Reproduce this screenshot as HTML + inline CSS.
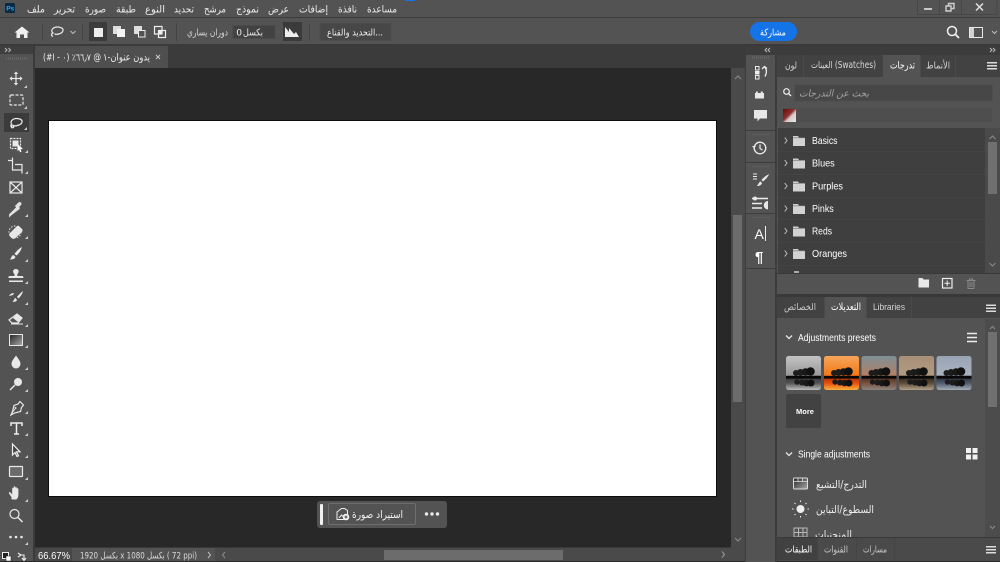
<!DOCTYPE html>
<html><head><meta charset="utf-8">
<style>
html,body{margin:0;padding:0;width:1000px;height:562px;overflow:hidden;background:#535353}
svg{display:block}
svg.root{filter:blur(.3px)}
text{font-family:"DejaVu Sans","Liberation Sans",sans-serif;fill:#ececec;font-size:10px}
.l{font-family:"Liberation Sans",sans-serif;font-size:10.5px;fill:#fff}
.i{fill:none;stroke:#e8e8e8;stroke-width:1.2}
.f{fill:#e8e8e8}
.c{fill:none;stroke:#bdbdbd;stroke-width:1}
</style></head><body>
<svg class="root" width="1000" height="562" viewBox="0 0 1000 562" xmlns="http://www.w3.org/2000/svg">
<defs>
<linearGradient id="gr" x1="0" y1="0" x2="1" y2="1"><stop offset="0" stop-color="#222"/><stop offset="1" stop-color="#aaa"/></linearGradient>
<linearGradient id="rd" x1="0" y1="0" x2="1" y2="1"><stop offset="0" stop-color="#6d0808"/><stop offset=".45" stop-color="#8a3030"/><stop offset=".6" stop-color="#d8c8c8"/><stop offset="1" stop-color="#e8e8e8"/></linearGradient>
<linearGradient id="t1" x1="0" y1="0" x2="0" y2="1"><stop offset="0" stop-color="#c4c4c4"/><stop offset=".55" stop-color="#9a9a9a"/><stop offset=".62" stop-color="#333"/><stop offset=".8" stop-color="#555"/><stop offset="1" stop-color="#bbb"/></linearGradient>
<linearGradient id="t2" x1="0" y1="0" x2="0" y2="1"><stop offset="0" stop-color="#f6a55c"/><stop offset=".55" stop-color="#f27a18"/><stop offset=".62" stop-color="#b02c04"/><stop offset=".8" stop-color="#e8500c"/><stop offset="1" stop-color="#f8b040"/></linearGradient>
<linearGradient id="t3" x1="0" y1="0" x2="0" y2="1"><stop offset="0" stop-color="#7f8f96"/><stop offset=".55" stop-color="#b08068"/><stop offset=".62" stop-color="#4a2c20"/><stop offset=".8" stop-color="#7a5240"/><stop offset="1" stop-color="#8a8480"/></linearGradient>
<linearGradient id="t4" x1="0" y1="0" x2="0" y2="1"><stop offset="0" stop-color="#a89078"/><stop offset=".55" stop-color="#b09a80"/><stop offset=".62" stop-color="#30241a"/><stop offset=".8" stop-color="#5e4c3a"/><stop offset="1" stop-color="#b0a088"/></linearGradient>
<linearGradient id="t5" x1="0" y1="0" x2="0" y2="1"><stop offset="0" stop-color="#98a4b4"/><stop offset=".55" stop-color="#aab2c0"/><stop offset=".62" stop-color="#262e38"/><stop offset=".8" stop-color="#505c6c"/><stop offset="1" stop-color="#a4acb8"/></linearGradient>
<g id="tree"><circle cx="10" cy="17" r="3" fill="#1c1c1c"/><circle cx="14.500" cy="16.500" r="3.500" fill="#1c1c1c"/><circle cx="19.500" cy="16" r="3.800" fill="#181818"/><circle cx="24.500" cy="15.500" r="4.300" fill="#101010"/><rect x="0" y="20" width="35" height="2.600" fill="#080808"/><circle cx="11" cy="26" r="2.700" fill="#1c1c1c"/><circle cx="16" cy="26.500" r="3" fill="#1c1c1c"/><circle cx="20.500" cy="27" r="3.300" fill="#181818"/><circle cx="25" cy="27" r="3.500" fill="#101010"/></g>
<g id="fold"><path d="M0 1h5l1 1.500h6v8.500H0z" fill="#d2d2d2"/><path d="M0 2.800h12" stroke="#777" stroke-width=".7"/></g>
<g id="chev"><path d="M-1.300-3L1 0l-2.300 3" class="c"/></g>
<g id="ham"><path d="M0 .75h10M0 3.75h10M0 6.75h10" stroke="#dcdcdc" stroke-width="1.400"/></g>
<g id="cor"><path d="M3 0v3H0z" fill="#cfcfcf"/></g>
</defs>

<!-- base -->
<rect width="1000" height="562" fill="#535353"/>
<!-- menu -->
<rect x="405" y="0" width="10" height="1" fill="#1473e6"/>
<rect x="5" y="3" width="10" height="10" rx="1.500" fill="#0a2a44"/>
<text x="6.300" y="10.600" style="font-size:6.500px;font-weight:bold;fill:#31a8ff;font-family:'Liberation Sans'">Ps</text>
<g style="direction:rtl">
<text x="45" y="12.500" textLength="18" lengthAdjust="spacingAndGlyphs">ملف</text>
<text x="75" y="12.500" textLength="21" lengthAdjust="spacingAndGlyphs">تحرير</text>
<text x="106" y="12.500" textLength="21" lengthAdjust="spacingAndGlyphs">صورة</text>
<text x="136" y="12.500" textLength="20" lengthAdjust="spacingAndGlyphs">طبقة</text>
<text x="165" y="12.500" textLength="20" lengthAdjust="spacingAndGlyphs">النوع</text>
<text x="194" y="12.500" textLength="20" lengthAdjust="spacingAndGlyphs">تحديد</text>
<text x="226" y="12.500" textLength="22" lengthAdjust="spacingAndGlyphs">مرشح</text>
<text x="259" y="12.500" textLength="23" lengthAdjust="spacingAndGlyphs">نموذج</text>
<text x="289" y="12.500" textLength="21" lengthAdjust="spacingAndGlyphs">عرض</text>
<text x="328" y="12.500" textLength="29" lengthAdjust="spacingAndGlyphs">إضافات</text>
<text x="357" y="12.500" textLength="19" lengthAdjust="spacingAndGlyphs">نافذة</text>
<text x="397" y="12.500" textLength="30" lengthAdjust="spacingAndGlyphs">مساعدة</text>
</g>
<!-- window buttons -->
<path d="M917.500 0v14.500H997V0M939.500 0v14.500M961.500 0v14.500" fill="none" stroke="#474747"/>
<rect x="924" y="8" width="8" height="2" fill="#c8c8c8"/>
<path d="M946 6h5v5h-5zM948.500 6V3.500h5.500v5h-3" fill="none" stroke="#d0d0d0" stroke-width="1.400"/>
<path d="M976 3.500l7 7M983 3.500l-7 7" stroke="#e0e0e0" stroke-width="1.500"/>
<rect y="17" width="1000" height="1" fill="#3d3d3d"/>

<!-- options -->
<path d="M22 26.500l-7.500 6h2V38h3.500v-3.500h4V38h3.500v-5.500h2z" fill="#f0f0f0"/>
<rect x="42" y="23" width="1" height="18" fill="#444"/>
<path d="M53 36.500c-2.500-1-1.500-3 0-3.500-3-2.500 0-6 4.500-6 3.500 0 6 1.500 5.500 3.500-.5 3-5.500 4.500-8.500 3.500" class="i"/>
<path d="M70.500 31l2.500 2.500 2.500-2.500" class="c"/>
<rect x="82" y="23" width="1" height="18" fill="#444"/>
<rect x="89" y="22" width="18" height="19" fill="#3b3b3b"/>
<rect x="94" y="28" width="9" height="9" fill="#ececec"/>
<path d="M113 26h8v8h-8z" fill="#ddd"/><path d="M117 29h8v8h-8z" fill="#f2f2f2"/>
<path d="M134 26h8v8h-8z" fill="#ddd"/><path d="M138.500 30.500h6.500v6.500h-6.500z" fill="#535353" stroke="#eee"/>
<path d="M154.500 26.500h7.500v7.500h-7.500zM158.500 30.500h7v7h-7z" fill="none" stroke="#eee" stroke-width="1.200"/><rect x="158.500" y="30.500" width="3.500" height="3.500" fill="#eee"/>
<rect x="176" y="23" width="1" height="18" fill="#444"/>
<g style="direction:rtl"><text x="228" y="35.500" textLength="41" lengthAdjust="spacingAndGlyphs" style="font-size:9.500px;fill:#d8d8d8">دوران يساري</text></g>
<rect x="233" y="25.500" width="42" height="13" fill="#424242" stroke="#4a4a4a"/>
<g style="direction:rtl"><text x="263" y="35.500" textLength="20" lengthAdjust="spacingAndGlyphs" style="font-size:9.500px">بكسل</text></g>
<text x="236.500" y="35.500" class="l" style="font-size:9.500px">0</text>
<rect x="283" y="22" width="19" height="19" fill="#3b3b3b"/>
<path d="M285 37v-10l4 5 0-4 5 6 2-2 3 5z" fill="#eee"/>
<rect x="309" y="23" width="1" height="18" fill="#444"/>
<rect x="320" y="23.500" width="71" height="17" fill="#474747" stroke="#4c4c4c"/>
<g style="direction:rtl"><text x="383" y="35.500" textLength="56" lengthAdjust="spacingAndGlyphs" style="font-size:9.500px">...التحديد والقناع</text></g>
<rect x="750" y="22" width="47" height="19" rx="9.500" fill="#1473e6"/>
<g style="direction:rtl"><text x="786" y="35.500" textLength="26" lengthAdjust="spacingAndGlyphs" style="font-size:9.500px;fill:#fff">مشاركة</text></g>
<circle cx="952" cy="31" r="4.500" fill="none" stroke="#f0f0f0" stroke-width="1.500"/><path d="M955.500 34.500l3.500 3.500" stroke="#f0f0f0" stroke-width="1.800"/>
<rect x="969.500" y="27.500" width="13" height="10" fill="none" stroke="#e8e8e8"/><rect x="970" y="28" width="4" height="9" fill="#d0d0d0"/>
<path d="M992 31l2.500 2.500 2.500-2.500" class="c"/>

<rect y="44" width="1000" height="2" fill="#3a3a3a"/>

<!-- left toolbar -->
<rect x="0" y="46" width="33" height="8" fill="#3f3f3f"/>
<path d="M5 48l2 2-2 2M8.500 48l2 2-2 2" class="c"/>
<path d="M6 58.500h22" stroke="#6a6a6a" stroke-dasharray="1 1" stroke-width="2"/>
<rect x="33" y="46" width="2" height="516" fill="#3a3a3a"/>
<rect x="4" y="113" width="25" height="19" fill="#3b3b3b"/>

<!-- tools -->
<path d="M16 72.500v12M10.500 78.500h11" class="i"/><path d="M16 71.500l-2.200 2.500h4.400zM16 85.500l-2.200-2.500h4.400zM9.500 78.500l2.500-2.200v4.400zM22.500 78.500l-2.500-2.200v4.400z" class="f"/>
<use href="#cor" x="24" y="85"/>
<rect x="10" y="95" width="13" height="10" rx="1" class="i" stroke-dasharray="3 1.500"/>
<use href="#cor" x="24" y="106"/>
<path d="M12.500 127c-2-.5-2-2-1-3-1.500-2.500 1-5.500 5-5.500 3.500 0 6 1.300 5.500 3.500-.5 3-6 4.500-9.500 3.500" class="i"/><circle cx="12.500" cy="126.500" r="1.300" class="i" stroke-width="1"/>
<use href="#cor" x="24" y="127"/>
<rect x="10.500" y="138.500" width="10" height="10" class="i" stroke-dasharray="2 1"/><rect x="12.500" y="140.500" width="6" height="6" class="f"/><path d="M17.500 144l5.500 5-2.500.3 1 2.500-1.500.5-1-2.500-1.500 1.500z" fill="#fff"/>
<use href="#cor" x="25" y="150"/>
<path d="M8 160.500h4.500v-3M12.500 160.500V170h9.500M22 173.500V164.500h-7" class="i" stroke-width="1.600"/>
<use href="#cor" x="25" y="171"/>
<rect x="10" y="182" width="12" height="11" class="i"/><path d="M10 182l12 11M22 182l-12 11" class="i"/>
<path d="M11 215l-1.500 1.500 0-2 7.500-7.500 2 2zM16.500 205l2-2c1.500-1.500 3.500.5 2 2l-2 2 1 1-1 1-3-3z" fill="#ddd" stroke="#e8e8e8" stroke-width=".8"/>
<use href="#cor" x="25" y="214"/>
<path d="M19 226l3 3c1 1 .5 2.500-.5 3.500l-6 5.500c-1.500 1.300-3 1-4 0l-1.500-1.500c-1-1-1-2.500 0-3.500l6-6c1-1 2-1.500 3-1z" class="f"/><circle cx="15" cy="232" r="6" fill="none" stroke="#e8e8e8" stroke-dasharray="1.500 1.500"/>
<use href="#cor" x="25" y="236"/>
<path d="M22 247c-3 1.500-6 4.500-7.500 7l2 1.500c2.500-2 4.500-5 5.500-8.500zM13.500 255c-2 .5-2 2.500-3.500 4.500 2.500 0 5-.5 5.500-2.500z" class="f"/>
<use href="#cor" x="25" y="259"/>
<path d="M16 269a2.500 2.500 0 0 1 2 4.200l-.7 1.300v1.500h5c.7 0 1 .5 1 1v1H8.500v-1c0-.5.300-1 1-1h5v-1.500l-.7-1.300a2.500 2.500 0 0 1 2.200-4.200zM9 280.500h14v1.500H9z" class="f"/>
<use href="#cor" x="25" y="281"/>
<path d="M23 291c-2 1.500-4.500 4-6 6l1.500 1.500c2-2 4-4.500 4.500-7.500zM15.500 298c-1.500.5-1.500 2.500-3 4 2 0 4-.5 4.500-2zM9 296c1-2 3-3 5-3l-1 2z" class="f"/>
<use href="#cor" x="25" y="302"/>
<path d="M17 314l5 4-4 5h-6l-3-3z" fill="none" stroke="#e8e8e8" stroke-width="1.200"/><path d="M17 314l5 4-4 4-5-4z" class="f"/><path d="M11 324h12" stroke="#e8e8e8"/>
<use href="#cor" x="25" y="324"/>
<rect x="9.500" y="334.500" width="13" height="11" fill="url(#gr)" stroke="#e8e8e8"/>
<use href="#cor" x="25" y="345"/>
<path d="M16 355.500c2 3 4.500 5.500 4.500 8.500a4.500 4.500 0 0 1-9 0c0-3 2.500-5.500 4.500-8.500z" class="f"/>
<use href="#cor" x="25" y="367"/>
<circle cx="18" cy="382" r="4" class="f"/><path d="M15 385l-5 5" stroke="#e8e8e8" stroke-width="1.500"/>
<use href="#cor" x="25" y="389"/>
<path d="M20 401.500l3.500 3.500-2 2.500-1 4-6 1.500-3.500 2 1.500-3.500 1.500-6 4-1.500z" class="i"/><circle cx="15.500" cy="408" r="1" class="f"/><path d="M11 414.500l4-5.500" stroke="#e8e8e8" stroke-width=".8"/>
<use href="#cor" x="25" y="411"/>
<path d="M11 426v-3h11v3M16.500 423v11M14 434h5" fill="none" stroke="#eee" stroke-width="1.500"/>
<use href="#cor" x="25" y="433"/>
<path d="M12.500 444v11l2.500-2.500 2 4 1.500-.7-2-4h3.500z" fill="#444" stroke="#eee" stroke-width="1.200"/>
<use href="#cor" x="25" y="455"/>
<rect x="9.500" y="466.500" width="13" height="10" rx=".5" fill="#6a6a6a" stroke="#e8e8e8" stroke-width="1.200"/>
<use href="#cor" x="25" y="477"/>
<path d="M12 498l-3-4.500c-.7-1 .7-2 1.500-1l1.700 2v-6c0-1 1.500-1 1.500 0V487c0-1 1.600-1 1.600 0v1c0-1 1.600-1 1.600 0v1c0-1 1.500-1 1.500 0v6c0 2-1 3.500-2 4.500h-4c-.5 0-1-1-1.400-1.500z" class="f"/>
<use href="#cor" x="25" y="499"/>
<circle cx="14.500" cy="514" r="4.500" fill="none" stroke="#e8e8e8" stroke-width="1.200"/><path d="M18 517.500l4.500 4.500" stroke="#e8e8e8" stroke-width="1.500"/>
<circle cx="10.500" cy="537" r="1.300" class="f"/><circle cx="16" cy="537" r="1.300" class="f"/><circle cx="21.500" cy="537" r="1.300" class="f"/>
<use href="#cor" x="25" y="542"/>
<rect x="2.500" y="552.500" width="6" height="6" fill="#222" stroke="#eee"/><rect x="6" y="556" width="5" height="5" fill="#fff" stroke="#222" stroke-width=".5"/>
<path d="M20 555h4v5M18 553l3 2-3 2M22 558l2 2.500 2-2.500" fill="none" stroke="#eee" stroke-width="1.100"/>

<!-- doc area -->
<rect x="35" y="46" width="710" height="22" fill="#3b3b3b"/>
<rect x="35" y="46" width="133" height="22" fill="#4f4f4f"/>
<g style="direction:rtl"><text x="150" y="60.500" textLength="47" lengthAdjust="spacingAndGlyphs" style="font-size:10px">يدون عنوان-١</text></g>
<text x="43" y="60.500" style="font-size:9.500px;direction:ltr;unicode-bidi:bidi-override" textLength="58" lengthAdjust="spacingAndGlyphs">(#I - ٠) ٪٦٦٫٧ @</text>
<path d="M156 55l4 4M160 55l-4 4" stroke="#ccc"/>
<rect x="35" y="68" width="696" height="480" fill="#282828"/>
<rect x="48" y="120" width="669" height="377" fill="#0c0c0c"/>
<rect x="49" y="121" width="667" height="375" fill="#fff"/>
<!-- v scroll -->
<rect x="731" y="68" width="14" height="480" fill="#4a4a4a"/>
<rect x="733" y="215" width="9" height="187" fill="#6c6c6c"/>
<path d="M735 79l3-3 3 3M735 538l3 3 3-3" fill="none" stroke="#8c8c8c"/>
<!-- floating -->
<rect x="317" y="501" width="130" height="27" rx="3" fill="#535353"/>
<rect x="320" y="504" width="3" height="21" rx="1" fill="#f0f0f0"/>
<rect x="328.500" y="503.500" width="87" height="21" rx="1.500" fill="none" stroke="#6e6e6e"/>
<path d="M337 512l4.500-3.500h3l3 2v9h-10.500z" fill="none" stroke="#eee"/><path d="M339 518l2.500-3 2 2" stroke="#eee" fill="none"/><circle cx="346" cy="517" r="3.300" fill="#f0f0f0"/><path d="M344.500 517h3M346 515.500v3" stroke="#444"/>
<g style="direction:rtl"><text x="403" y="518" textLength="51" lengthAdjust="spacingAndGlyphs" style="font-size:10.500px;fill:#f2f2f2">استيراد صورة</text></g>
<circle cx="426.500" cy="514" r="1.700" class="f"/><circle cx="432" cy="514" r="1.700" class="f"/><circle cx="437.500" cy="514" r="1.700" class="f"/>
<!-- status -->
<rect x="35" y="547.500" width="710" height="14.500" fill="#4a4a4a"/>
<rect x="35" y="548" width="180" height="14" fill="#535353"/>
<rect x="35" y="548" width="37" height="14" fill="#474747"/>
<text x="38" y="559" class="l" style="font-size:10.500px" textLength="32" lengthAdjust="spacingAndGlyphs">66.67%</text>
<text x="80" y="558.500" style="font-size:9px;fill:#dcdcdc" textLength="117" lengthAdjust="spacingAndGlyphs">1920 بكسل x 1080 بكسل ( 72 ppi)</text>
<path d="M208 552l2.500 3-2.500 3" class="c"/>
<path d="M225 552l-2.500 3 2.500 3" fill="none" stroke="#8a8a8a"/>
<rect x="384" y="550" width="179" height="10" fill="#6c6c6c"/>
<path d="M722 551.500l2.500 3-2.500 3" fill="none" stroke="#9a9a9a"/>
<rect x="0" y="561" width="1000" height="1" fill="#2a2a2a"/>

<!-- right side columns -->
<rect x="745" y="46" width="32" height="516" fill="#3d3d3d"/>
<rect x="746" y="46" width="29" height="516" fill="#535353"/>
<rect x="745" y="46" width="255" height="9" fill="#3c3c3c"/>
<path d="M770 48l-2 2 2 2M767 48l-2 2 2 2" class="c"/>
<path d="M990 48l2 2-2 2M993 48l2 2-2 2" class="c"/>
<path d="M752 57.500h18" stroke="#6a6a6a" stroke-dasharray="1 1" stroke-width="2"/>
<!-- icon panel -->
<path d="M755.500 66.500h3.500v3.500h-3.500zM755.500 75.500h3.500v3.500h-3.500z" fill="none" stroke="#eee"/><rect x="755" y="71" width="4.500" height="3.500" fill="#eee"/>
<path d="M762 69l2.500-2.500 2.500 2M764.500 67c2.500 2 2.500 6 .5 9.500" fill="none" stroke="#eee" stroke-width="1.300"/>
<path d="M756 91.500h1.800v1.500h3v-1.500h2v1.500h1.200v5.500H755v-5.500h1z" class="f"/>
<path d="M754 110h13v8.500h-7l-2.500 3v-3H754z" class="f"/>
<rect x="746" y="130" width="29" height="1" fill="#3d3d3d"/>
<path d="M752 134.500h18" stroke="#666" stroke-dasharray="1 1"/>
<circle cx="760" cy="148" r="5.800" fill="none" stroke="#eee" stroke-width="1.300"/><path d="M760 144.500v4l2.500 1.500" fill="none" stroke="#eee" stroke-width="1.200"/><path d="M752 146l2 2.500 2-2.500z" class="f"/>
<rect x="746" y="162" width="29" height="1" fill="#3d3d3d"/>
<path d="M752 166.500h18" stroke="#666" stroke-dasharray="1 1"/>
<path d="M769 174c-3 1.500-5.500 3.500-7.500 6l1.500 1.500c2.500-2 5-4.500 6-7.500zM760.500 181.500c-1.500.5-2 2.500-3.500 4.500 2.500 0 4.500-1 5-3z" class="f"/><path d="M753 174h4M753 176.500h4M753 179h4" stroke="#e8e8e8"/>
<path d="M752 198.500h16M752 203.500h10M752 208h10" stroke="#eee" stroke-width="1.400"/><circle cx="755" cy="198.500" r="2" class="f"/><path d="M768 201v8.500a4.200 4.200 0 0 1 0-8.500z" class="f"/>
<rect x="746" y="213" width="29" height="1" fill="#3d3d3d"/>
<path d="M752 217.500h18" stroke="#666" stroke-dasharray="1 1"/>
<text x="754.500" y="239" class="l" style="font-size:14px">A</text><path d="M765.500 226v15" stroke="#eee"/>
<text x="755" y="262" class="l" style="font-size:15px;font-weight:bold">¶</text>
<rect x="746" y="268" width="29" height="1" fill="#3d3d3d"/>

<!-- gradients panel -->
<rect x="777" y="55" width="223" height="22" fill="#424242"/>
<rect x="883" y="55" width="37" height="22" fill="#535353"/>
<path d="M803.500 55v22M920.500 55v22M955.500 55v22" stroke="#4a4a4a"/>
<g style="direction:rtl">
<text x="797" y="68.500" textLength="12" lengthAdjust="spacingAndGlyphs" style="fill:#d4d4d4;font-size:9.500px">لون</text>
<text x="915" y="68.500" textLength="25" lengthAdjust="spacingAndGlyphs" style="font-size:10px;fill:#fff">تدرجات</text>
<text x="950" y="68.500" textLength="24" lengthAdjust="spacingAndGlyphs" style="fill:#d4d4d4;font-size:9.500px">الأنماط</text>
</g>
<text x="811" y="68" style="font-size:9.500px;fill:#d8d8d8" textLength="65" lengthAdjust="spacingAndGlyphs">العينات (Swatches)</text>
<use href="#ham" x="987" y="62"/>
<circle cx="786.500" cy="91.500" r="2.800" fill="none" stroke="#eee" stroke-width="1.200"/><path d="M788.500 93.500l2.500 2.500" stroke="#eee" stroke-width="1.400"/>
<rect x="794.500" y="85" width="198" height="16" fill="#474747" stroke="#4e4e4e"/>
<g style="direction:rtl"><text x="869" y="96.500" textLength="70" lengthAdjust="spacingAndGlyphs" style="font-size:9.500px;font-style:italic;fill:#a4a4a4">بحث عن التدرجات</text></g>
<rect x="783" y="108" width="209" height="14" fill="#4e4e4e"/>
<rect x="783" y="109" width="13" height="13" fill="url(#rd)"/>
<rect x="778" y="128" width="207" height="145" fill="#3f3f3f"/>
<path d="M778 151.500h207M778 174.500h207M778 197.500h207M778 219.500h207M778 242.500h207M778 265.500h207" stroke="#444"/>
<rect x="985" y="128" width="15" height="145" fill="#4a4a4a"/>
<rect x="988" y="142" width="9" height="52" fill="#707070"/>
<path d="M989.500 139l3-3 3 3M989.500 263l3 3 3-3" fill="none" stroke="#8c8c8c"/>
<use href="#chev" x="786" y="140.500"/><use href="#fold" x="793" y="135"/><text x="812" y="144" class="l" textLength="25.500" lengthAdjust="spacingAndGlyphs">Basics</text>
<use href="#chev" x="786" y="163"/><use href="#fold" x="793" y="157.500"/><text x="812" y="166.500" class="l" textLength="22.700" lengthAdjust="spacingAndGlyphs">Blues</text>
<use href="#chev" x="786" y="186"/><use href="#fold" x="793" y="180.500"/><text x="812" y="189.500" class="l" textLength="31" lengthAdjust="spacingAndGlyphs">Purples</text>
<use href="#chev" x="786" y="208.500"/><use href="#fold" x="793" y="203"/><text x="812" y="212" class="l" textLength="21.700" lengthAdjust="spacingAndGlyphs">Pinks</text>
<use href="#chev" x="786" y="231"/><use href="#fold" x="793" y="225.500"/><text x="812" y="234.500" class="l" textLength="20" lengthAdjust="spacingAndGlyphs">Reds</text>
<use href="#chev" x="786" y="253.500"/><use href="#fold" x="793" y="248"/><text x="812" y="257" class="l" textLength="35" lengthAdjust="spacingAndGlyphs">Oranges</text>
<rect x="794" y="271" width="5" height="2" fill="#aaa"/>
<rect x="777" y="273" width="223" height="1" fill="#383838"/>
<path d="M918.500 278h4l1 1.500h5.500v8h-10.500z" class="f"/>
<rect x="942.500" y="278.500" width="9.500" height="9.500" fill="none" stroke="#eee" stroke-width="1.200"/><path d="M947.200 280.500v5.500M944.500 283.200h5.500" stroke="#eee"/>
<path d="M966.500 280.500h9M968 280.500v8h6v-8M969.500 280.500v-1.500h3v1.500M970 282v5M972 282v5" fill="none" stroke="#8a8a8a"/>
<rect x="777" y="294" width="223" height="3" fill="#383838"/>

<!-- adjust panel -->
<rect x="777" y="297" width="223" height="21" fill="#424242"/>
<rect x="824" y="297" width="42" height="21" fill="#535353"/>
<path d="M824.500 297v21M866.500 297v21M911.500 297v21" stroke="#4a4a4a"/>
<g style="direction:rtl">
<text x="816" y="310" textLength="32" lengthAdjust="spacingAndGlyphs" style="fill:#c8c8c8;font-size:9.500px">الخصائص</text>
<text x="861" y="310" textLength="30" lengthAdjust="spacingAndGlyphs" style="fill:#fff;font-size:10px">التعديلات</text>
</g>
<text x="873" y="310" class="l" style="font-size:9px;fill:#d4d4d4" textLength="32" lengthAdjust="spacingAndGlyphs">Libraries</text>
<use href="#ham" x="986" y="304.500"/>
<path d="M786 335.500l3 3 3-3" fill="none" stroke="#e8e8e8" stroke-width="1.300"/>
<text x="798" y="341" class="l" textLength="78" lengthAdjust="spacingAndGlyphs" style="font-size:10.500px">Adjustments presets</text>
<path d="M967 333.500h10M967 337.500h10M967 341.500h10" stroke="#eee" stroke-width="1.600"/>
<rect x="985" y="319" width="15" height="218" fill="#4c4c4c"/>
<rect x="988" y="332" width="9" height="75" fill="#707070"/>
<path d="M990 329l2.500-2.500 2.500 2.500M990 526l2.500 2.500 2.500-2.500" fill="none" stroke="#8c8c8c"/>
<rect x="786" y="356" width="35" height="34" rx="2.500" fill="url(#t1)"/><use href="#tree" x="786" y="356"/>
<rect x="824" y="356" width="35" height="34" rx="2.500" fill="url(#t2)"/><use href="#tree" x="824" y="356"/>
<rect x="861.500" y="356" width="35" height="34" rx="2.500" fill="url(#t3)"/><use href="#tree" x="861.500" y="356"/>
<rect x="899" y="356" width="35" height="34" rx="2.500" fill="url(#t4)"/><use href="#tree" x="899" y="356"/>
<rect x="936.500" y="356" width="35" height="34" rx="2.500" fill="url(#t5)"/><use href="#tree" x="936.500" y="356"/>
<rect x="786" y="394" width="35" height="34" rx="2" fill="#424242"/>
<text x="796" y="414" class="l" style="font-size:7.500px;font-weight:bold">More</text>
<path d="M786 452.500l3 3 3-3" fill="none" stroke="#e8e8e8" stroke-width="1.300"/>
<text x="798" y="457.500" class="l" textLength="72" lengthAdjust="spacingAndGlyphs" style="font-size:10.500px">Single adjustments</text>
<path d="M966 448h5v5h-5zM972.500 448h5v5h-5zM966 454.500h5v5h-5zM972.500 454.500h5v5h-5z" fill="#f2f2f2"/>
<rect x="793.500" y="478" width="14" height="11" fill="url(#gr)" stroke="#ddd" rx="1"/><path d="M794 481.500h13M798 478v4M802.500 478v4" stroke="#ddd" stroke-width=".8"/>
<g style="direction:rtl">
<text x="867" y="488" textLength="51" lengthAdjust="spacingAndGlyphs" style="font-size:10.500px">التدرج/التشبع</text>
<text x="874" y="513" textLength="58" lengthAdjust="spacingAndGlyphs" style="font-size:10.500px">السطوع/التباين</text>
</g>
<circle cx="800.500" cy="509" r="4" fill="#eee"/>
<path d="M800.500 502v-1.500M800.500 517.500V516M793.500 509H792M809 509h-1.500M795.500 504l-1-1M806.500 515l-1-1M795.500 514l-1 1M806.500 503l-1 1" stroke="#eee"/>
<path d="M794 528h13v9h-13zM798.500 528v9M803 528v9M794 532.500h13" fill="none" stroke="#b8b8b8"/>
<svg x="777" y="525" width="208" height="12" viewBox="777 525 208 12"><g style="direction:rtl"><text x="852" y="538" textLength="37" lengthAdjust="spacingAndGlyphs" style="font-size:10.500px">المنحنيات</text></g></svg>

<!-- bottom tabs -->
<rect x="777" y="537" width="223" height="1" fill="#383838"/>
<rect x="777" y="538" width="223" height="23" fill="#4a4a4a"/>
<rect x="777" y="538" width="40" height="22" fill="#414141"/>
<path d="M817.500 538v22M856.500 538v22M894.500 538v22" stroke="#454545"/>
<g style="direction:rtl">
<text x="812" y="552.500" textLength="27" lengthAdjust="spacingAndGlyphs" style="fill:#fff;font-size:9.500px">الطبقات</text>
<text x="848" y="552.500" textLength="24" lengthAdjust="spacingAndGlyphs" style="fill:#c8c8c8;font-size:9.500px">القنوات</text>
<text x="887" y="552.500" textLength="24" lengthAdjust="spacingAndGlyphs" style="fill:#c8c8c8;font-size:9.500px">مسارات</text>
</g>
<use href="#ham" x="986" y="546"/>
</svg>
</body></html>
